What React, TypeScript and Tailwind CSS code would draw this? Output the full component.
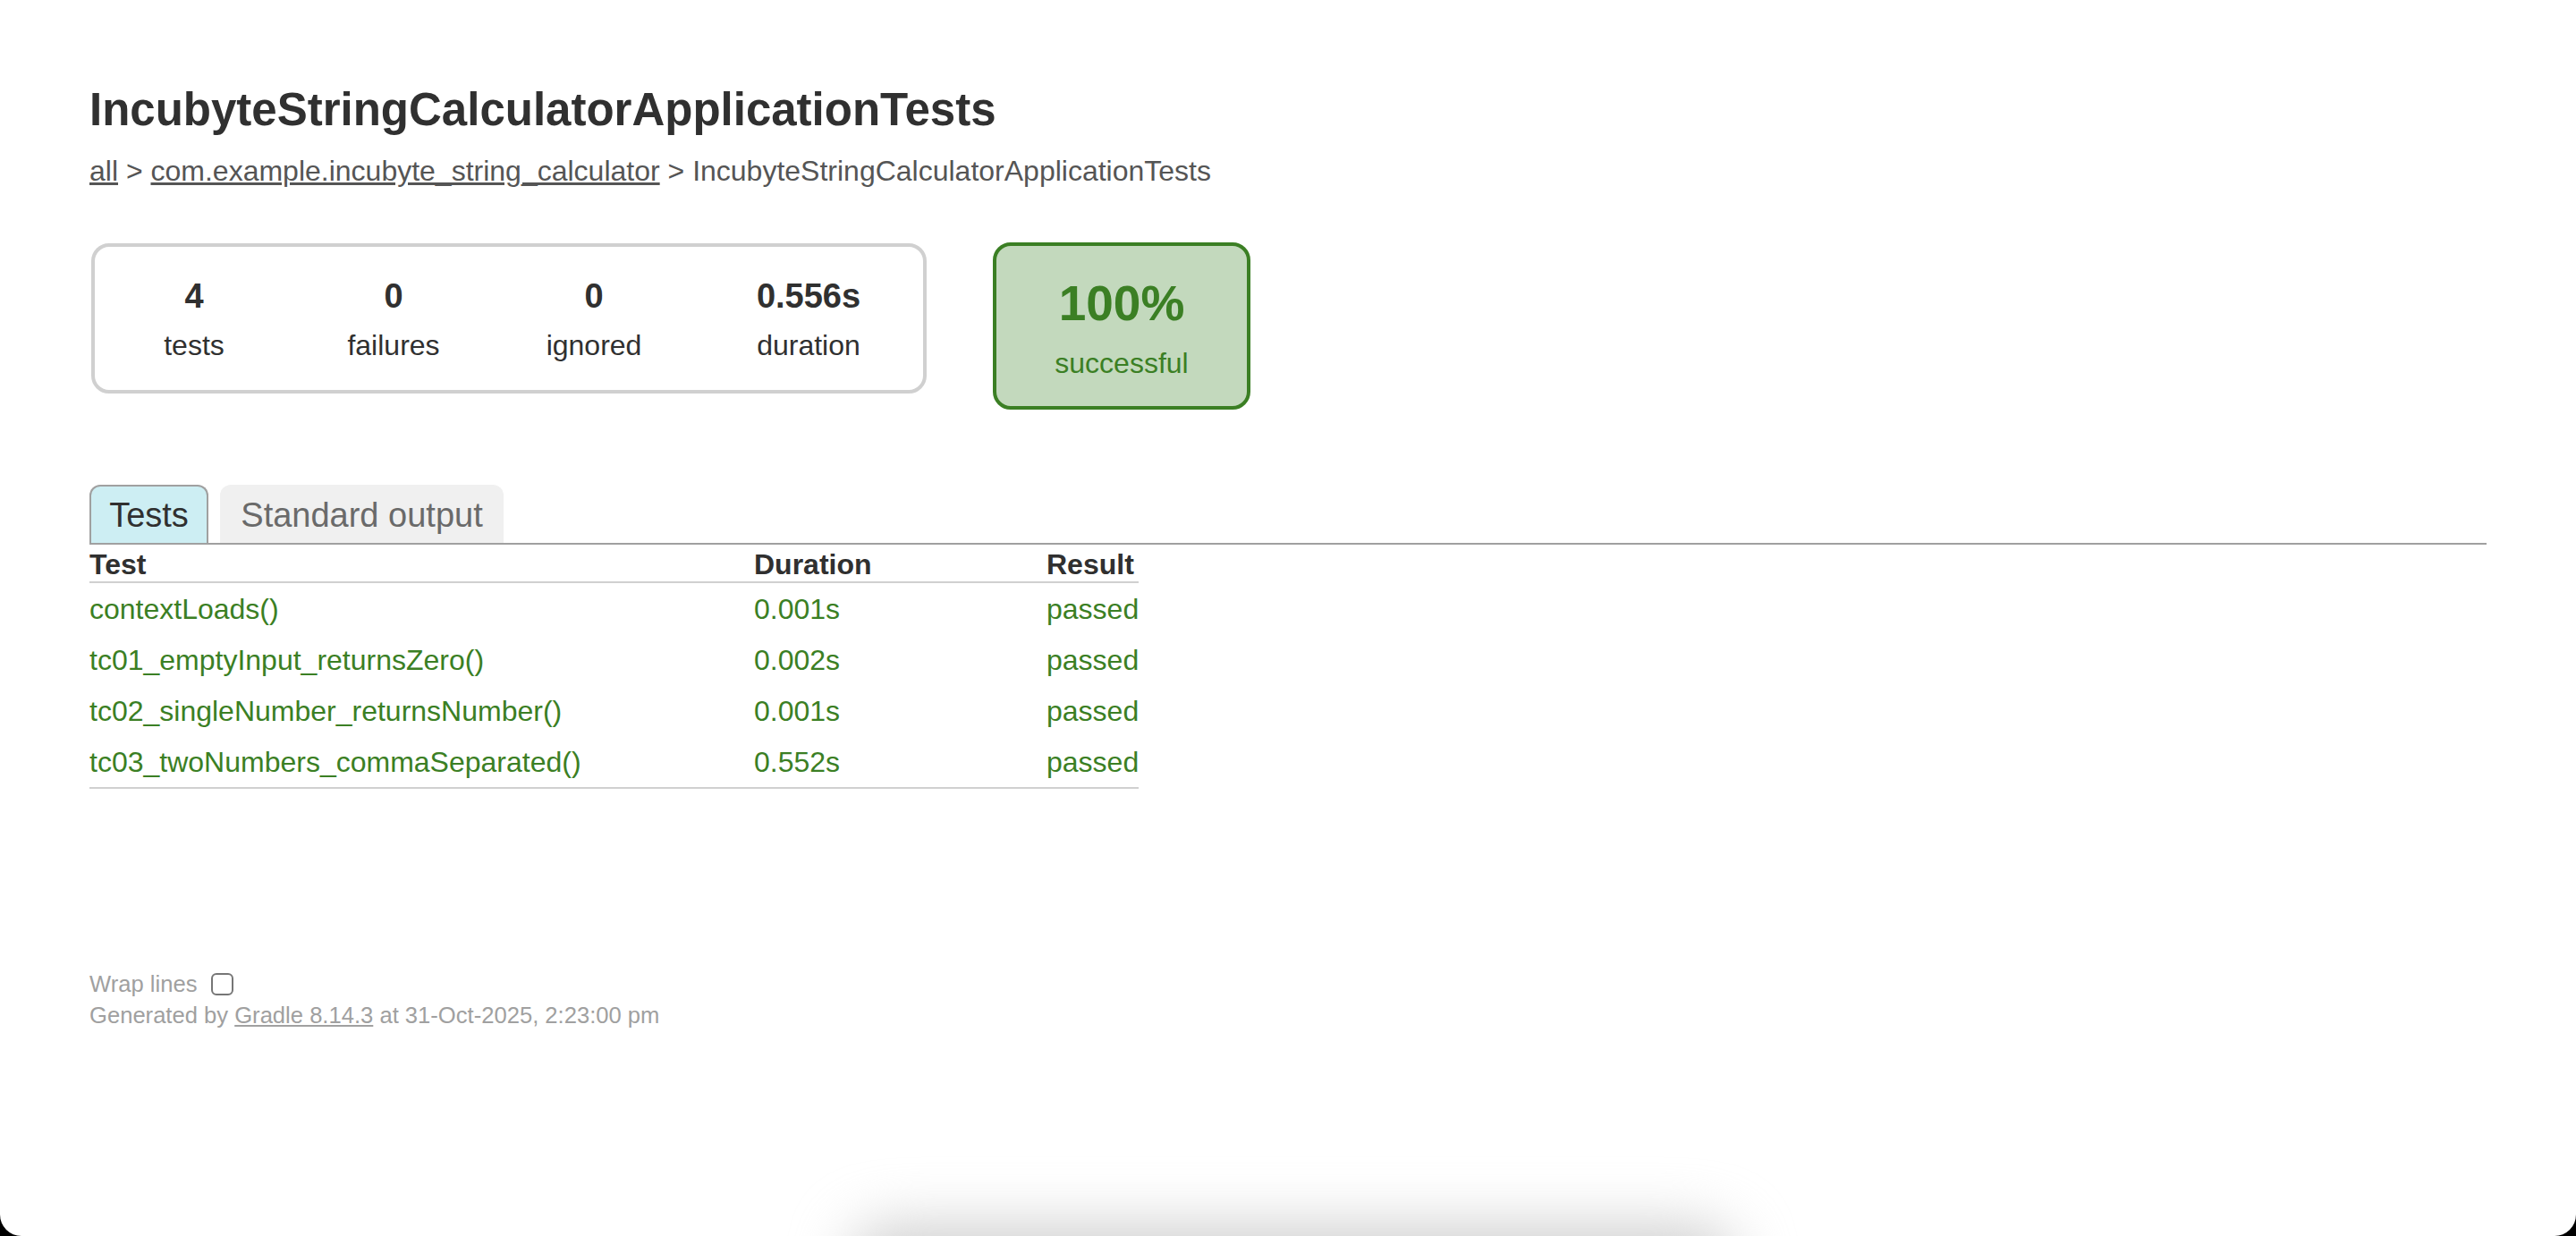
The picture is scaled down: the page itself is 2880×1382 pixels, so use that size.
import React from "react";

const stats = [
  { value: "4", label: "tests", width: "w-[222px]" },
  { value: "0", label: "failures", width: "w-[224px]" },
  { value: "0", label: "ignored", width: "w-[224px]" },
  { value: "0.556s", label: "duration", width: "w-[256px]" },
];

const rows = [
  { name: "contextLoads()", duration: "0.001s" },
  { name: "tc01_emptyInput_returnsZero()", duration: "0.002s" },
  { name: "tc02_singleNumber_returnsNumber()", duration: "0.001s" },
  { name: "tc03_twoNumbers_commaSeparated()", duration: "0.552s" },
];

const App = () => {
  return (
    <div className="relative w-full h-[1382px] overflow-hidden bg-black font-['Liberation_Sans',Arial,sans-serif]">
      {/* page */}
      <div className="h-full bg-white rounded-b-[24px] px-[100px] pt-[93px] text-[#303030]">
        {/* title */}
        <h1 className="text-[51px] leading-[59px] font-bold whitespace-nowrap mb-[21px]">
          IncubyteStringCalculatorApplicationTests
        </h1>

        {/* breadcrumb */}
        <div className="text-[32px] leading-[37px] text-[#555555] whitespace-nowrap">
          <a className="underline">all</a> &gt;{" "}
          <a className="underline">com.example.incubyte_string_calculator</a> &gt;
          IncubyteStringCalculatorApplicationTests
        </div>

        {/* summary */}
        <div className="flex items-start gap-[74px] mt-[62px] pl-[2px]">
          <div className="flex border-4 border-[#d0d0d0] rounded-[20px]">
            {stats.map((s) => (
              <div key={s.label} className={`${s.width} flex flex-col items-center pt-[33px] pb-[31px]`}>
                <div className="text-[38px] leading-[44px] font-bold mb-[15px]">{s.value}</div>
                <div className="text-[32px] leading-[37px]">{s.label}</div>
              </div>
            ))}
          </div>

          <div className="w-[288px] flex flex-col items-center border-4 border-[#3b7f24] bg-[#c3d9bd] rounded-[20px] pt-[33px] pb-[29px] text-[#3b7f24] mt-[-1px]">
            <div className="text-[55px] leading-[63px] font-bold mb-[17px]">100%</div>
            <div className="text-[32px] leading-[37px]">successful</div>
          </div>
        </div>

        {/* tabs */}
        <div className="flex items-end gap-[13px] mt-[84px] border-b-2 border-[#a0a0a0]">
          <div className="w-[133px] text-center border-2 border-b-0 border-[#a0a0a0] bg-[#cdeef3] rounded-t-[12px] pt-[11px] pb-[10px] text-[38px] leading-[42px] text-[#303030]">
            Tests
          </div>
          <div className="w-[317px] text-center border-2 border-b-0 border-[#f0f0f0] bg-[#f0f0f0] rounded-t-[12px] pt-[11px] pb-[10px] text-[38px] leading-[42px] text-[#6a6a6a]">
            Standard output
          </div>
        </div>

        {/* table */}
        <div className="w-[1173px] mt-[4px] text-[32px] leading-[37px] border-b-2 border-[#d0d0d0]">
          <div className="grid grid-cols-[743px_327px_103px] font-bold border-b-2 border-[#d0d0d0] whitespace-nowrap">
            <div>Test</div>
            <div>Duration</div>
            <div>Result</div>
          </div>
          {rows.map((r) => (
            <div key={r.name} className="grid grid-cols-[743px_327px_103px] pt-[11px] pb-[9px] text-[#3b7f24] whitespace-nowrap">
              <div>{r.name}</div>
              <div>{r.duration}</div>
              <div>passed</div>
            </div>
          ))}
        </div>

        {/* footer */}
        <div className="mt-[199px] text-[25.6px] text-[#a0a0a0] whitespace-nowrap">
          <div className="flex items-center h-[39px]">
            <span>Wrap lines</span>
            <span className="ml-[16px] w-[25px] h-[25px] border-2 border-[#767676] rounded-[6px] bg-white" />
          </div>
          <div className="leading-[30px]">
            Generated by <a className="underline">Gradle 8.14.3</a> at 31-Oct-2025, 2:23:00 pm
          </div>
        </div>
      </div>

      {/* shadow from below the screen */}
      <div className="absolute left-[950px] top-[1370px] w-[990px] h-[90px] bg-[#cfcfcf] rounded-[45px] blur-[32px]" />
    </div>
  );
};

export default App;
